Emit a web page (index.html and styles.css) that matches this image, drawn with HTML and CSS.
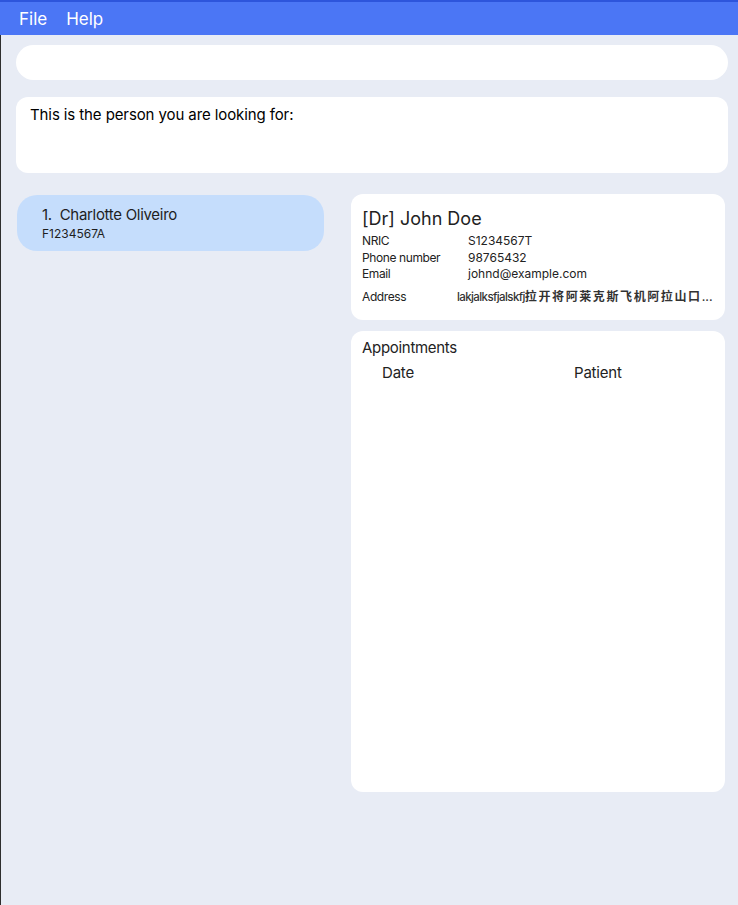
FILE: index.html
```html
<!DOCTYPE html>
<html>
<head>
<meta charset="utf-8">
<link rel="stylesheet" href="styles.css">
</head>
<body>
<div class="menubar">
  <span class="menu-item">File</span>
  <span class="menu-item">Help</span>
</div>
<div class="main">
  <div class="command-box"></div>
  <div class="result-box">This is the person you are looking for:</div>
  <div class="columns">
    <div class="list-col">
      <div class="person-card">
        <div class="person-name">1.&nbsp; Charlotte Oliveiro</div>
        <div class="person-id">F1234567A</div>
      </div>
    </div>
    <div class="detail-col">
      <div class="detail-card">
        <div class="detail-name">[Dr] John Doe</div>
        <div class="detail-row"><span class="label">NRIC</span><span class="value">S1234567T</span></div>
        <div class="detail-row"><span class="label">Phone number</span><span class="value">98765432</span></div>
        <div class="detail-row"><span class="label">Email</span><span class="value">johnd@example.com</span></div>
        <div class="detail-row address"><span class="label">Address</span><span class="value addr"><span class="latin">lakjalksfjalskfj</span><span class="cjk">拉开将阿莱克斯飞机阿拉山口</span>...</span></div>
      </div>
      <div class="appt-card">
        <div class="appt-title">Appointments</div>
        <div class="appt-head"><span class="col-date">Date</span><span class="col-patient">Patient</span></div>
      </div>
    </div>
  </div>
</div>
</body>
</html>
```
FILE: styles.css
```css
html, body {
  margin: 0;
  padding: 0;
  height: 100%;
}
body {
  background: #e8ecf5;
  font-family: Inter, "Noto Sans CJK SC", sans-serif;
  color: #222;
  display: flex;
  flex-direction: column;
}
.menubar {
  height: 33px;
  background: #4b76f5;
  border-top: 2px solid #2d55dc;
  display: flex;
  align-items: center;
  padding-left: 19px;
  gap: 19px;
}
.menu-item {
  color: #ffffff;
  font-size: 17px;
}
.main {
  flex: 1;
  border-left: 1px solid #2e2e2e;
  padding: 10px 10px 0 15px;
}
.command-box {
  height: 35px;
  background: #fff;
  border-radius: 18px;
}
.result-box {
  margin-top: 17px;
  height: 76px;
  background: #fff;
  border-radius: 12px;
  box-sizing: border-box;
  padding: 8px 14px;
  font-size: 15px;
  letter-spacing: -0.1px;
  color: #000;
}
.columns {
  display: flex;
  margin-top: 21px;
  gap: 27px;
}
.list-col {
  width: 308px;
  flex: none;
  padding-top: 1px;
}
.person-card {
  margin-left: 1px;
  height: 56px;
  background: #c5ddfc;
  border-radius: 20px;
  box-sizing: border-box;
  padding: 10px 0 0 25px;
}
.person-name {
  font-size: 15px;
  line-height: 20px;
  color: #1e1e1e;
  letter-spacing: -0.3px;
}
.person-id {
  font-size: 12px;
  line-height: 17px;
  color: #1e1e1e;
}
.detail-col {
  flex: 1;
  min-width: 0;
  margin-right: 3px;
  display: flex;
  flex-direction: column;
  gap: 11px;
}
.detail-card {
  background: #fff;
  border-radius: 12px;
  height: 126px;
  box-sizing: border-box;
  padding: 12px 11px 0 11px;
}
.detail-name {
  font-size: 18px;
  line-height: 25px;
  color: #222;
  margin-bottom: 2px;
}
.detail-row {
  display: flex;
  font-size: 12px;
  line-height: 16.5px;
  color: #222;
  white-space: nowrap;
}
.detail-row .label {
  width: 106px;
  flex: none;
  letter-spacing: -0.4px;
}
.detail-row.address {
  margin-top: 6px;
}
.detail-row.address .label {
  width: 95px;
}
.value.addr {
  font-weight: 500;
  color: #333;
}
.latin {
  font-size: 11.5px;
  letter-spacing: -0.6px;
}
.cjk {
  font-weight: 600;
  letter-spacing: 1.6px;
  font-size: 12px;
}
.appt-card {
  background: #fff;
  border-radius: 12px;
  height: 461px;
  box-sizing: border-box;
  padding: 8px 11px;
}
.appt-title {
  font-size: 15px;
  line-height: 18px;
  color: #222;
  letter-spacing: -0.3px;
}
.appt-head {
  display: flex;
  margin-top: 7px;
  padding-left: 20px;
  font-size: 15px;
  line-height: 18px;
  color: #222;
  letter-spacing: -0.2px;
}
.col-date {
  width: 192px;
}
```
